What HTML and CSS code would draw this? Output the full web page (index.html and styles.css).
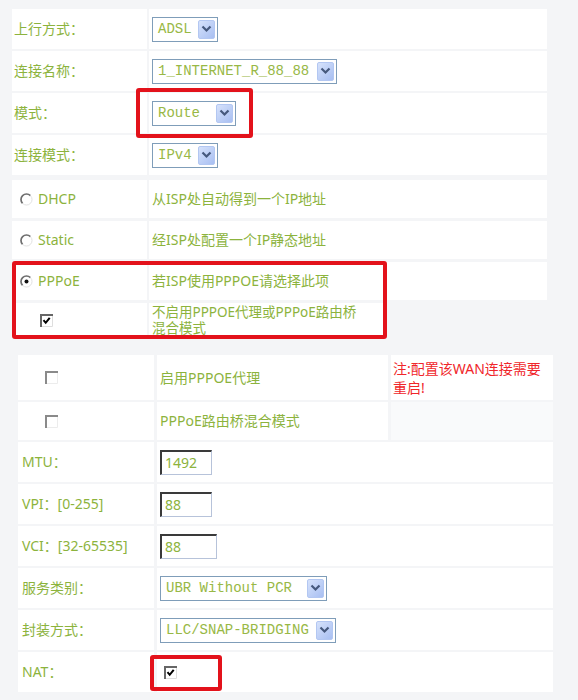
FILE: index.html
```html
<!DOCTYPE html>
<html>

<head>
    <title>WAN</title>
    <link rel="stylesheet" href="styles.css">
</head>

<body>
    <div class="page">
        <div class="panel-top">
            <div class="group group-main">
                <div class="row">
                    <div class="cell label">上行方式：</div>
                    <div class="cell value">
                        <span class="sel sel-adsl"><span>ADSL</span><span class="arrow"><svg width="11" height="8" viewBox="0 0 11 8"><path d="M1.5 1.5l4 4 4-4" stroke="#46597d" stroke-width="2.2" fill="none"/></svg></span></span>
                    </div>
                </div>
                <div class="row">
                    <div class="cell label">连接名称：</div>
                    <div class="cell value">
                        <span class="sel sel-name"><span>1_INTERNET_R_88_88</span><span class="arrow"><svg width="11" height="8" viewBox="0 0 11 8"><path d="M1.5 1.5l4 4 4-4" stroke="#46597d" stroke-width="2.2" fill="none"/></svg></span></span>
                    </div>
                </div>
                <div class="row">
                    <div class="cell label">模式：</div>
                    <div class="cell value">
                        <span class="sel sel-route"><span>Route</span><span class="arrow"><svg width="11" height="8" viewBox="0 0 11 8"><path d="M1.5 1.5l4 4 4-4" stroke="#46597d" stroke-width="2.2" fill="none"/></svg></span></span>
                    </div>
                </div>
                <div class="row">
                    <div class="cell label">连接模式：</div>
                    <div class="cell value">
                        <span class="sel sel-adsl"><span>IPv4</span><span class="arrow"><svg width="11" height="8" viewBox="0 0 11 8"><path d="M1.5 1.5l4 4 4-4" stroke="#46597d" stroke-width="2.2" fill="none"/></svg></span></span>
                    </div>
                </div>
            </div>

            <div class="group group-opts">
                <div class="row row-opt">
                    <div class="cell label label-radio">
                        <svg class="radio" width="13" height="13" viewBox="0 0 13 13"><circle cx="6.5" cy="6.5" r="5.5" fill="#fff"/><path d="M2.6 10.4A5.5 5.5 0 0 1 10.4 2.6" stroke="#6e6e6e" stroke-width="1.7" fill="none"/><path d="M10.4 2.6A5.5 5.5 0 0 1 2.6 10.4" stroke="#e2e2e2" fill="none"/></svg>
                        DHCP
                    </div>
                    <div class="cell value">从ISP处自动得到一个IP地址</div>
                </div>
                <div class="row row-opt">
                    <div class="cell label label-radio">
                        <svg class="radio" width="13" height="13" viewBox="0 0 13 13"><circle cx="6.5" cy="6.5" r="5.5" fill="#fff"/><path d="M2.6 10.4A5.5 5.5 0 0 1 10.4 2.6" stroke="#6e6e6e" stroke-width="1.7" fill="none"/><path d="M10.4 2.6A5.5 5.5 0 0 1 2.6 10.4" stroke="#e2e2e2" fill="none"/></svg>
                        Static
                    </div>
                    <div class="cell value">经ISP处配置一个IP静态地址</div>
                </div>
                <div class="row row-opt">
                    <div class="cell label label-radio">
                        <svg class="radio" width="13" height="13" viewBox="0 0 13 13"><circle cx="6.5" cy="6.5" r="5.5" fill="#fff"/><path d="M2.6 10.4A5.5 5.5 0 0 1 10.4 2.6" stroke="#6e6e6e" stroke-width="1.7" fill="none"/><path d="M10.4 2.6A5.5 5.5 0 0 1 2.6 10.4" stroke="#e2e2e2" fill="none"/><circle cx="6.5" cy="6.5" r="2" fill="#111"/></svg>
                        PPPoE
                    </div>
                    <div class="cell value">若ISP使用PPPOE请选择此项</div>
                </div>
                <div class="row row-sub">
                    <div class="cell label label-check">
                        <svg class="box" width="13" height="13" viewBox="0 0 13 13"><rect width="13" height="13" fill="#fff"/><path d="M1 13V1H13" stroke="#666" stroke-width="2" fill="none"/><path d="M12.5 2V12.5H2" stroke="#dedede" fill="none"/><path d="M3.5 6.2l2.2 2.6 4-5" stroke="#000" stroke-width="2" fill="none"/></svg>
                    </div>
                    <div class="cell value value-wrap">不启用PPPOE代理或PPPoE路由桥<br>混合模式</div>
                </div>
            </div>
        </div>

        <div class="panel-bottom">
            <div class="row row-note">
                <div class="cell label label-check">
                    <svg class="box" width="13" height="13" viewBox="0 0 13 13"><rect width="13" height="13" fill="#fff"/><path d="M1 13V1H13" stroke="#8a8a8a" stroke-width="2" fill="none"/><path d="M12.5 2V12.5H2" stroke="#ececec" fill="none"/></svg>
                </div>
                <div class="cell value">启用PPPOE代理</div>
                <div class="cell note">注:配置该WAN连接需要<br>重启!</div>
            </div>
            <div class="row row-three">
                <div class="cell label label-check">
                    <svg class="box" width="13" height="13" viewBox="0 0 13 13"><rect width="13" height="13" fill="#fff"/><path d="M1 13V1H13" stroke="#8a8a8a" stroke-width="2" fill="none"/><path d="M12.5 2V12.5H2" stroke="#ececec" fill="none"/></svg>
                </div>
                <div class="cell value">PPPoE路由桥混合模式</div>
                <div class="cell blank"></div>
            </div>
            <div class="row">
                <div class="cell label">MTU：</div>
                <div class="cell value"><input class="txt" type="text" value="1492"></div>
            </div>
            <div class="row">
                <div class="cell label">VPI：[0-255]</div>
                <div class="cell value"><input class="txt" type="text" value="88"></div>
            </div>
            <div class="row">
                <div class="cell label">VCI：[32-65535]</div>
                <div class="cell value"><input class="txt txt-wide" type="text" value="88"></div>
            </div>
            <div class="row">
                <div class="cell label">服务类别：</div>
                <div class="cell value">
                    <span class="sel sel-ubr"><span>UBR Without PCR</span><span class="arrow"><svg width="11" height="8" viewBox="0 0 11 8"><path d="M1.5 1.5l4 4 4-4" stroke="#46597d" stroke-width="2.2" fill="none"/></svg></span></span>
                </div>
            </div>
            <div class="row">
                <div class="cell label">封装方式：</div>
                <div class="cell value">
                    <span class="sel sel-llc"><span>LLC/SNAP-BRIDGING</span><span class="arrow"><svg width="11" height="8" viewBox="0 0 11 8"><path d="M1.5 1.5l4 4 4-4" stroke="#46597d" stroke-width="2.2" fill="none"/></svg></span></span>
                </div>
            </div>
            <div class="row">
                <div class="cell label">NAT：</div>
                <div class="cell value value-check">
                    <svg class="box" width="13" height="13" viewBox="0 0 13 13"><rect width="13" height="13" fill="#fff"/><path d="M1 13V1H13" stroke="#666" stroke-width="2" fill="none"/><path d="M12.5 2V12.5H2" stroke="#dedede" fill="none"/><path d="M3.5 6.2l2.2 2.6 4-5" stroke="#000" stroke-width="2" fill="none"/></svg>
                </div>
            </div>
        </div>

        <div class="mark mark-mode"></div>
        <div class="mark mark-pppoe"></div>
        <div class="mark mark-nat"></div>
    </div>
</body>

</html>
```

FILE: styles.css
```css
body {
    margin: 0;
    background-color: #f4f5f7;
    font-family: "Noto Sans", "Noto Sans CJK SC", sans-serif;
    font-size: 14px;
    color: #8cb33d;
}

.page {
    position: relative;
    width: 578px;
    height: 700px;
    overflow: hidden;
}

.panel-top {
    margin-left: 12px;
    width: 535px;
    padding-top: 9px;
}

.group {
    display: flex;
    flex-direction: column;
}

.group-main {
    gap: 2px;
}

.group-opts {
    gap: 3px;
    margin-top: 5px;
}

.row {
    display: grid;
    grid-template-columns: 135px 1fr;
    column-gap: 2px;
    height: 40px;
}

.row-opt {
    height: 38px;
}

.row-sub {
    height: 34px;
    grid-template-columns: 135px 237px;
}

.cell {
    background-color: #fff;
    display: flex;
    align-items: center;
    line-height: 16px;
    white-space: nowrap;
}

.label {
    padding-left: 2px;
}

.value {
    padding-left: 3px;
}

.label-radio {
    padding-left: 8px;
}

.radio {
    margin-right: 5px;
    flex: none;
}

.label-check {
    padding-left: 28px;
}

.value-wrap {
    font-size: 13.5px;
    line-height: 16px;
}

/* fake select boxes */
.sel {
    box-sizing: border-box;
    display: inline-flex;
    align-items: center;
    height: 25px;
    padding-left: 5px;
    border: 1px solid #7f9db9;
    background-color: #fff;
    font-family: "Liberation Mono", monospace;
    font-size: 14px;
    color: #98b845;
}

.arrow {
    box-sizing: border-box;
    display: flex;
    align-items: center;
    justify-content: center;
    width: 17px;
    height: 19px;
    margin-left: auto;
    margin-right: 2px;
    border: 1px solid #b3c7f2;
    border-radius: 2px;
    background: linear-gradient(135deg, #d6e2fb, #a8bff2);
}

.sel-adsl {
    width: 66px;
}

.sel-name {
    width: 185px;
}

.sel-route {
    width: 84px;
}

.sel-ubr {
    width: 167px;
}

.sel-llc {
    width: 176px;
}

/* bottom table */
.panel-bottom {
    margin: 18px 0 0 18px;
    width: 535px;
    display: flex;
    flex-direction: column;
    gap: 2px;
}

.panel-bottom .row {
    grid-template-columns: 136px 1fr;
    column-gap: 3px;
}

.panel-bottom .label {
    padding-left: 4px;
}

.panel-bottom .label-check {
    padding-left: 27px;
}

.panel-bottom .row-note {
    height: 45px;
    grid-template-columns: 136px 231px 1fr;
}

.panel-bottom .row-three {
    height: 38px;
    grid-template-columns: 136px 231px 1fr;
}

.note {
    padding-left: 2px;
    color: #f0262b;
    line-height: 19px;
}

.blank {
    background-color: #f9fafb;
}

.value-check {
    padding-left: 7px;
}

.txt {
    box-sizing: border-box;
    width: 52px;
    height: 25px;
    margin: 0;
    padding: 0 3px;
    border-style: solid;
    border-width: 2px 1px 1px 2px;
    border-color: #3a3a3a #b7c3da #b7c3da #3a3a3a;
    background-color: #fff;
    font-family: "Noto Sans", sans-serif;
    font-size: 14px;
    color: #8cb33d;
    outline: none;
}

.txt-wide {
    width: 57px;
}

/* red highlight frames drawn over the form */
.mark {
    position: absolute;
    box-sizing: border-box;
    border: 4px solid #e3121b;
    border-radius: 3px;
}

.mark-mode {
    left: 136px;
    top: 88px;
    width: 117px;
    height: 50px;
}

.mark-pppoe {
    left: 12px;
    top: 261px;
    width: 375px;
    height: 78px;
}

.mark-nat {
    left: 150px;
    top: 655px;
    width: 72px;
    height: 36px;
}
```
